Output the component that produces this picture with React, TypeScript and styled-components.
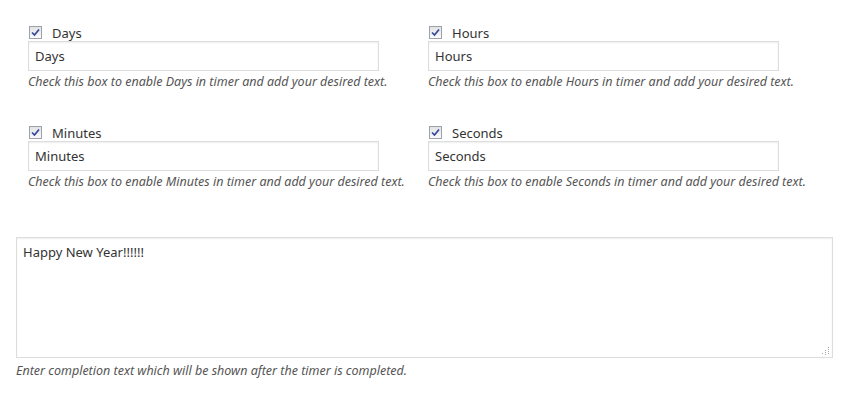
import styled, { createGlobalStyle } from 'styled-components';

const GlobalStyle = createGlobalStyle`
  body {
    margin: 0;
    background: #fff;
    font-family: "Noto Sans", "Open Sans", sans-serif;
    color: #333;
  }
`;

const Page = styled.div`
  padding: 24px 15px 0 16px;
`;

const Grid = styled.div`
  display: grid;
  grid-template-columns: 400px 400px;
  row-gap: 34px;
  padding-left: 12px;
`;

const Field = styled.div`
  display: flex;
  flex-direction: column;
`;

const LabelRow = styled.label`
  display: flex;
  align-items: center;
  height: 17px;
  gap: 10px;
  padding-left: 1px;
  font-size: 13px;
  color: #333;
`;

const Box = styled.span`
  width: 11px;
  height: 11px;
  border: 1px solid #9da2a8;
  background: linear-gradient(#e2e3e6, #fafafa);
  display: inline-flex;
  align-items: center;
  justify-content: center;
`;

const TextInput = styled.input`
  box-sizing: border-box;
  width: 351px;
  height: 30px;
  padding: 0 6px;
  border: 1px solid #ddd;
  box-shadow: inset 0 1px 2px rgba(0, 0, 0, 0.07);
  font-family: inherit;
  font-size: 13px;
  color: #333;
  outline: none;
`;

const Help = styled.p`
  margin: 2px 0 0;
  font-size: 12.5px;
  font-style: italic;
  color: #555;
  white-space: nowrap;
`;

const Completion = styled.div`
  margin-top: 47px;
`;

const AreaWrap = styled.div`
  position: relative;
  width: 817px;
`;

const TextArea = styled.textarea`
  display: block;
  box-sizing: border-box;
  width: 817px;
  height: 121px;
  padding: 5px 6px;
  border: 1px solid #ddd;
  box-shadow: inset 0 1px 2px rgba(0, 0, 0, 0.07);
  font-family: inherit;
  font-size: 13px;
  color: #333;
  outline: none;
  resize: none;
`;

const Grip = styled.svg`
  position: absolute;
  right: 3px;
  bottom: 3px;
  pointer-events: none;
`;

const CompletionHelp = styled(Help)`
  margin-top: 4px;
`;

function Check() {
  return (
    <Box>
      <svg width="9" height="9" viewBox="0 0 9 9">
        <path d="M1 4.5 L3.5 7 L8 1.5" fill="none" stroke="#34479a" strokeWidth="1.7" />
      </svg>
    </Box>
  );
}

const fields = ['Days', 'Hours', 'Minutes', 'Seconds'];

export default function App() {
  return (
    <>
      <GlobalStyle />
      <Page>
        <Grid>
          {fields.map((f) => (
            <Field key={f}>
              <LabelRow>
                <Check />
                {f}
              </LabelRow>
              <TextInput defaultValue={f} />
              <Help>Check this box to enable {f} in timer and add your desired text.</Help>
            </Field>
          ))}
        </Grid>
        <Completion>
          <AreaWrap>
            <TextArea defaultValue="Happy New Year!!!!!!" />
            <Grip width="8" height="8" viewBox="0 0 8 8">
              <rect x="6" y="0" width="1" height="1" fill="#aaa" />
              <rect x="6" y="2" width="1" height="1" fill="#aaa" />
              <rect x="6" y="4" width="1" height="1" fill="#aaa" />
              <rect x="6" y="6" width="1" height="1" fill="#aaa" />
              <rect x="3" y="3" width="1" height="1" fill="#aaa" />
              <rect x="3" y="5" width="1" height="1" fill="#aaa" />
              <rect x="3" y="7" width="1" height="1" fill="#aaa" />
              <rect x="0" y="6" width="1" height="1" fill="#aaa" />
            </Grip>
          </AreaWrap>
          <CompletionHelp>Enter completion text which will be shown after the timer is completed.</CompletionHelp>
        </Completion>
      </Page>
    </>
  );
}
